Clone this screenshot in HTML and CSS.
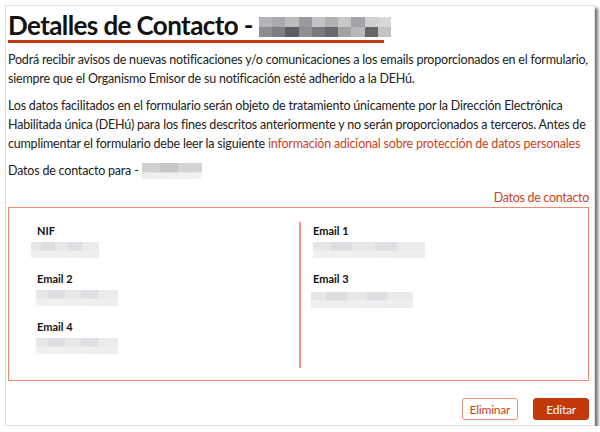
FILE: index.html
```html
<!DOCTYPE html>
<html lang="es">
<head>
  <meta charset="UTF-8">
  <title>Detalles de Contacto</title>
  <link rel="stylesheet" href="styles.css">
</head>
<body>
  <div class="window">
    <!-- Title -->
    <h1 class="title">Detalles de Contacto - <span class="blur blur-title"></span></h1>

    <p>Podrá recibir avisos de nuevas notificaciones y/o comunicaciones a los emails proporcionados en el formulario,<br>siempre que el Organismo Emisor de su notificación esté adherido a la DEHú.</p>

    <p class="gap">Los datos facilitados en el formulario serán objeto de tratamiento únicamente por la Dirección Electrónica<br>Habilitada única (DEHú) para los fines descritos anteriormente y no serán proporcionados a terceros. Antes de<br>cumplimentar el formulario debe leer la siguiente <a href="#">información adicional sobre protección de datos personales</a></p>

    <p class="gap">Datos de contacto para - <span class="blur blur-name"></span></p>

    <!-- Contact card -->
    <div class="legend">Datos de contacto</div>
    <div class="card">
      <div class="col">
        <div class="field">
          <div class="label">NIF</div>
          <div class="blur blur-nif"></div>
        </div>
        <div class="field">
          <div class="label">Email 2</div>
          <div class="blur blur-mail"></div>
        </div>
        <div class="field">
          <div class="label">Email 4</div>
          <div class="blur blur-mail"></div>
        </div>
      </div>
      <div class="col col-right">
        <div class="field">
          <div class="label">Email 1</div>
          <div class="blur blur-mail1"></div>
        </div>
        <div class="field">
          <div class="label">Email 3</div>
          <div class="blur blur-mail3"></div>
        </div>
      </div>
    </div>

    <!-- Buttons -->
    <div class="actions">
      <button class="btn btn-outline">Eliminar</button>
      <button class="btn btn-fill">Editar</button>
    </div>
  </div>
</body>
</html>
```

FILE: styles.css
```css
/* Page and window frame */
body {
  margin: 0;
  background: #fff;
  font-family: Lato, "Open Sans", sans-serif;
  color: #222;
}

.window {
  margin: 5px 0 0 5px;
  width: 590px;
  height: 421px;
  padding: 0 5px 0 2px;
  box-sizing: border-box;
  border: 1px solid #e2e2e2;
  box-shadow: 3px 3px 3px rgba(0, 0, 0, 0.55);
  background: #fff;
  overflow: hidden;
}

/* Title with red underline */
.title {
  display: inline-block;
  margin: 4px 0 0 0;
  font-size: 26px;
  line-height: 30px;
  font-weight: 700;
  letter-spacing: -0.6px;
  color: #111;
  border-bottom: 3px solid #c0390e;
  width: 376px;
  white-space: nowrap;
}

p {
  margin: 7px 0 0 0;
  font-size: 12.5px;
  line-height: 19px;
  letter-spacing: -0.2px;
  white-space: nowrap;
}
p.gap {
  margin-top: 8px;
}

p a {
  color: #c8441c;
  text-decoration: none;
}

/* Pixelated placeholders */
.blur {
  display: inline-block;
}
.blur-title {
  width: 132px;
  height: 20px;
  vertical-align: -2px;
  background:
    linear-gradient(to right, #b4b4b8 0 10%, #a9a9ad 10% 20%, #bcbcbc 20% 30%, #9a9a9e 30% 40%, #c2c2c4 40% 50%, #b0b0b2 50% 60%, #c8c8ca 60% 70%, #a4a4a8 70% 80%, #cfcfcf 80% 90%, #d8d8da 90% 100%) top / 100% 50% no-repeat,
    linear-gradient(to right, #8e8e92 0 10%, #7d7d82 10% 20%, #5d5d62 20% 30%, #8f8f92 30% 40%, #7a7a7e 40% 50%, #6a6a6e 50% 60%, #a5a3a0 60% 70%, #b8b8ba 70% 80%, #666 80% 90%, #c4c4c6 90% 100%) bottom / 100% 50% no-repeat;
}
.blur-name {
  width: 60px;
  height: 16px;
  vertical-align: -4px;
  background:
    linear-gradient(to right, #d0d0d2 0 30%, #c6c6c8 30% 60%, #d4d4d6 60% 100%) top / 100% 60% no-repeat,
    linear-gradient(to right, #ececec, #f2f2f2) bottom / 100% 40% no-repeat;
}
.blur-nif,
.blur-mail,
.blur-mail1,
.blur-mail3 {
  display: block;
  height: 16px;
  margin-top: 4px;
  background:
    linear-gradient(to right, #e6e6e8 0 15%, #dcdde0 15% 35%, #e8e6e6 35% 55%, #dedfe2 55% 75%, #eaeaea 75% 100%) top / 100% 55% no-repeat,
    linear-gradient(to right, #f0f0f0, #eeeeee) bottom / 100% 45% no-repeat;
}
.blur-nif { width: 68px; margin-left: -6px; }
.blur-mail { width: 82px; margin-left: -1px; }
.blur-mail1 { width: 112px; }
.blur-mail3 { width: 102px; margin-left: -2px; margin-top: 6px; }

/* Contact card */
.legend {
  margin-top: 9px;
  text-align: right;
  font-size: 12.5px;
  line-height: 18px;
  letter-spacing: -0.3px;
  color: #c8441c;
}

.card {
  margin-top: 0;
  height: 174px;
  box-sizing: border-box;
  border: 1px solid #ec8a74;
  padding: 14px 0 15px;
  display: grid;
  grid-template-columns: 290px 1fr;
}

.col {
  padding: 2px 0 0 28px;
}
.col-right {
  border-left: 2px solid #ec9a84;
  padding-left: 12px;
}

.field {
  height: 48px;
}

.label {
  font-size: 11px;
  line-height: 14px;
  font-weight: 700;
  color: #111;
}

/* Bottom buttons */
.actions {
  display: flex;
  justify-content: flex-end;
  gap: 15px;
  margin-top: 17px;
}

.btn {
  height: 22px;
  padding: 0 7px;
  font-family: inherit;
  font-size: 12px;
  letter-spacing: -0.2px;
  border-radius: 3px;
  cursor: pointer;
}
.btn-outline {
  background: #fff;
  color: #c8441c;
  border: 1px solid #e8917c;
}
.btn-fill {
  background: #c2390b;
  color: #fff;
  border: 1px solid #c2390b;
  padding: 0 12px;
}
```
